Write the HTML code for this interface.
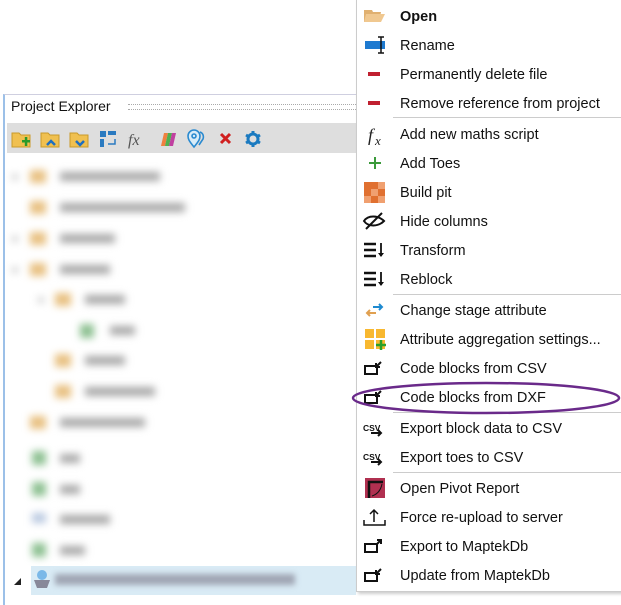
<!DOCTYPE html>
<html><head><style>
body{margin:0;width:621px;height:597px;position:relative;overflow:hidden;background:#fff;font-family:"Liberation Sans",sans-serif;}
.panel{position:absolute;left:3px;top:94px;width:420px;height:510px;border-left:2px solid #9cc0e8;border-top:1px solid #cfcfe0;background:#fff}
.hdr{position:absolute;left:11px;top:98px;font-size:14px;color:#111}
.dots{position:absolute;left:128px;top:104px;width:228px;height:4px;border-top:1px dotted #aaa;border-bottom:1px dotted #aaa}
.tb{position:absolute;left:7px;top:123px;width:350px;height:30px;background:#dedede}
.blur{position:absolute;filter:blur(4px)}
.menu{position:absolute;left:356px;top:-2px;width:270px;height:592px;background:#fff;border:1px solid #ccc;box-shadow:2px 2px 3px rgba(0,0,0,.2)}
.mi{position:absolute;left:400px;font-size:14.5px;color:#111;white-space:nowrap}
.sep{position:absolute;left:393px;width:228px;border-top:1px solid #ccc}
</style></head><body>
<div class="panel"></div>
<div class="hdr">Project Explorer</div>
<div class="dots"></div>
<div class="tb"></div>
<svg style="position:absolute;left:10px;top:128px" width="260" height="22">
<g><path d="M2 5h7l2 2h9v12H2z" fill="#f0c050" stroke="#c99a2a"/><rect x="12" y="12" width="8" height="2.5" fill="#2a9a2a"/><rect x="14.8" y="9" width="2.5" height="9" fill="#2a9a2a"/></g>
<g transform="translate(29,0)"><path d="M2 5h7l2 2h9v12H2z" fill="#f0c050" stroke="#c99a2a"/><path d="M8 17l4-4 4 4" stroke="#1e6fc0" stroke-width="2.5" fill="none"/></g>
<g transform="translate(58,0)"><path d="M2 5h7l2 2h9v12H2z" fill="#f0c050" stroke="#c99a2a"/><path d="M8 13l4 4 4-4" stroke="#1e6fc0" stroke-width="2.5" fill="none"/></g>
<g transform="translate(88,0)" fill="#2a7ac0"><rect x="2" y="3" width="6" height="6"/><rect x="10" y="3" width="8" height="4"/><rect x="2" y="11" width="4" height="8"/><path d="M10 16h7v-5" stroke="#2a7ac0" fill="none" stroke-width="1.5"/></g>
<text x="118" y="17" font-family="Liberation Serif" font-style="italic" font-size="16" fill="#555">fx</text>
<g transform="translate(147,0)"><path d="M4 18l3-13h4l-3 13z" fill="#f08040"/><path d="M8 18l3-13h4l-3 13z" fill="#50b050"/><path d="M12 18l3-13h4l-3 13z" fill="#c040a0"/></g>
<g transform="translate(175,0)" fill="none" stroke="#2a8ad0" stroke-width="1.6"><path d="M9 19c-5-6-6-8-6-11a6 6 0 0112 0c0 3-1 5-6 11z" fill="#d8ecf8"/><circle cx="9" cy="8" r="2"/><path d="M15 4c3 1 4 4 3 7l-4 6"/></g>
<path d="M211 6l9 9M220 6l-9 9" stroke="#d02020" stroke-width="3"/>
<g transform="translate(243,11)"><circle r="5" fill="none" stroke="#1a7ac0" stroke-width="3"/><g stroke="#1a7ac0" stroke-width="3"><path d="M0-8v3M0 8v-3M-7-4l2.5 1.5M7 4l-2.5-1.5M-7 4l2.5-1.5M7-4l-2.5 1.5"/></g></g>
</svg>
<div class="blur" style="left:0;top:160px;width:355px;height:400px">
<svg width="355" height="400">
<g fill="#e8c080"><rect x="30" y="10" width="16" height="13"/><rect x="30" y="41" width="16" height="13"/><rect x="30" y="72" width="16" height="13"/><rect x="30" y="103" width="16" height="13"/><rect x="55" y="133" width="16" height="13"/><rect x="55" y="194" width="16" height="13"/><rect x="55" y="225" width="16" height="13"/><rect x="30" y="256" width="16" height="13"/></g>
<g fill="#8cc090"><rect x="80" y="164" width="14" height="14"/><rect x="32" y="291" width="14" height="14"/><rect x="32" y="322" width="14" height="14"/><rect x="32" y="383" width="14" height="14"/></g>
<rect x="32" y="353" width="14" height="10" fill="#b8c8e0"/>
<g fill="#a8a8a8"><rect x="60" y="12" width="100" height="9"/><rect x="60" y="43" width="125" height="9"/><rect x="60" y="74" width="55" height="9"/><rect x="60" y="105" width="50" height="9"/><rect x="85" y="135" width="40" height="9"/><rect x="110" y="166" width="25" height="9"/><rect x="85" y="196" width="40" height="9"/><rect x="85" y="227" width="70" height="9"/><rect x="60" y="258" width="85" height="9"/><rect x="60" y="294" width="20" height="9"/><rect x="60" y="325" width="20" height="9"/><rect x="60" y="355" width="50" height="9"/><rect x="60" y="386" width="25" height="9"/></g>
<g fill="#ccc"><rect x="12" y="14" width="6" height="6"/><rect x="12" y="76" width="6" height="6"/><rect x="12" y="107" width="6" height="6"/><rect x="38" y="137" width="6" height="6"/></g>
</svg></div>
<div style="position:absolute;left:31px;top:566px;width:325px;height:29px;background:#d9ebf5"></div>
<div class="blur" style="left:55px;top:574px;width:240px;height:11px;background:#a0a6b4;filter:blur(3px)"></div>
<div style="position:absolute;left:14px;top:578px;width:0;height:0;border-left:7px solid transparent;border-bottom:7px solid #222"></div>
<svg style="position:absolute;left:32px;top:568px" width="20" height="22"><circle cx="10" cy="7" r="5" fill="#7ab8e8"/><path d="M2 12h16l-3 8H5z" fill="#889"/></svg>

<div class="menu"></div>
<svg style="position:absolute;left:356px;top:0" width="40" height="597">
<path d="M8 10h8l1 2h8l-2 10H8z" fill="#e0b070"/><path d="M10 14h19l-4 8H8z" fill="#f0c890"/>
<rect x="9" y="41" width="20" height="8" fill="#1e7ad0"/><path d="M22 37h6M25 37v16M22 53h6" stroke="#111" stroke-width="1.5"/>
<rect x="12" y="72" width="12" height="4" fill="#c02030"/>
<rect x="12" y="101" width="12" height="4" fill="#c02030"/>
<text x="12" y="141" font-family="Liberation Serif" font-style="italic" font-size="18" fill="#222">f</text><text x="19" y="145" font-family="Liberation Serif" font-style="italic" font-size="13" fill="#222">x</text>
<path d="M13 163h12M19 157v12" stroke="#3a9a3a" stroke-width="2"/>
<g fill="#e07030"><rect x="8" y="182" width="14" height="7"/><rect x="8" y="182" width="7" height="14"/><rect x="22" y="189" width="7" height="7"/><rect x="15" y="196" width="7" height="7"/></g><g fill="#f0a070"><rect x="15" y="189" width="7" height="7"/><rect x="22" y="182" width="7" height="7"/><rect x="8" y="196" width="7" height="7"/><rect x="22" y="196" width="7" height="7"/></g>
<path d="M8 221c4-6 14-6 20 0c-6 6-16 6-20 0z" fill="none" stroke="#111" stroke-width="2"/><path d="M10 229l16-16" stroke="#111" stroke-width="2"/>
<g stroke="#111" stroke-width="2.5"><path d="M8 244h12M8 250h12M8 256h12"/><path d="M25 243v13" stroke-width="1.8"/></g><path d="M22 253l3 4 3-4z" fill="#111"/>
<g stroke="#111" stroke-width="2.5"><path d="M8 273h12M8 279h12M8 285h12"/><path d="M25 272v13" stroke-width="1.8"/></g><path d="M22 282l3 4 3-4z" fill="#111"/>
<path d="M17 307h9M23 304l3 3-3 3" stroke="#1e8ad0" stroke-width="2" fill="none"/><path d="M11 313h9M14 310l-3 3 3 3" stroke="#e0a050" stroke-width="2" fill="none"/>
<rect x="9" y="329" width="9" height="9" fill="#f8b830"/><rect x="20" y="329" width="9" height="9" fill="#f8b830"/><rect x="9" y="340" width="9" height="9" fill="#f8b830"/><rect x="20" y="340" width="9" height="9" fill="#f8b830"/><path d="M20 345h10M25 340v10" stroke="#2aa02a" stroke-width="2.5"/>
<g fill="none" stroke="#111" stroke-width="2"><rect x="9" y="366" width="12" height="8"/><path d="M25 362l-5 5M20 363v4h4"/><rect x="9" y="395" width="12" height="8"/><path d="M25 391l-5 5M20 392v4h4"/></g>
<text x="7" y="431" font-family="Liberation Sans" font-weight="bold" font-size="8.5" fill="#111">CSV</text><path d="M15 433h10M22 430l3 3-3 3" stroke="#111" stroke-width="2" fill="none"/>
<text x="7" y="460" font-family="Liberation Sans" font-weight="bold" font-size="8.5" fill="#111">CSV</text><path d="M15 462h10M22 459l3 3-3 3" stroke="#111" stroke-width="2" fill="none"/>
<rect x="9" y="478" width="20" height="20" fill="#b03050"/><path d="M13 498v-16h14" stroke="#111" stroke-width="2.5" fill="none"/><path d="M16 496c6-2 9-7 10-12" stroke="#111" stroke-width="1" fill="none"/>
<path d="M8 520v5h21v-5M18 522v-12M14 514l4-4 4 4" stroke="#111" stroke-width="1.5" fill="none"/>
<g fill="none" stroke="#111" stroke-width="2"><rect x="9" y="544" width="12" height="8"/><path d="M20 545l5-5M21 540h4v4"/><rect x="9" y="573" width="12" height="8"/><path d="M25 569l-5 5M20 570v4h4"/></g>
</svg>
<div class="mi" style="top:9px;font-weight:bold">Open</div>
<div class="mi" style="top:38px">Rename</div>
<div class="mi" style="top:67px">Permanently delete file</div>
<div class="mi" style="top:96px">Remove reference from project</div>
<div class="sep" style="top:117px"></div>
<div class="mi" style="top:127px">Add new maths script</div>
<div class="mi" style="top:156px">Add Toes</div>
<div class="mi" style="top:185px">Build pit</div>
<div class="mi" style="top:214px">Hide columns</div>
<div class="mi" style="top:243px">Transform</div>
<div class="mi" style="top:272px">Reblock</div>
<div class="sep" style="top:294px"></div>
<div class="mi" style="top:303px">Change stage attribute</div>
<div class="mi" style="top:332px">Attribute aggregation settings...</div>
<div class="mi" style="top:361px">Code blocks from CSV</div>
<div class="mi" style="top:390px">Code blocks from DXF</div>
<div class="sep" style="top:412px"></div>
<div class="mi" style="top:421px">Export block data to CSV</div>
<div class="mi" style="top:450px">Export toes to CSV</div>
<div class="sep" style="top:472px"></div>
<div class="mi" style="top:481px">Open Pivot Report</div>
<div class="mi" style="top:510px">Force re-upload to server</div>
<div class="mi" style="top:539px">Export to MaptekDb</div>
<div class="mi" style="top:568px">Update from MaptekDb</div>
<svg style="position:absolute;left:0;top:0" width="621" height="597"><ellipse cx="486" cy="398" rx="133" ry="15" fill="none" stroke="#6a2a8a" stroke-width="2.5"/></svg>
</body></html>
